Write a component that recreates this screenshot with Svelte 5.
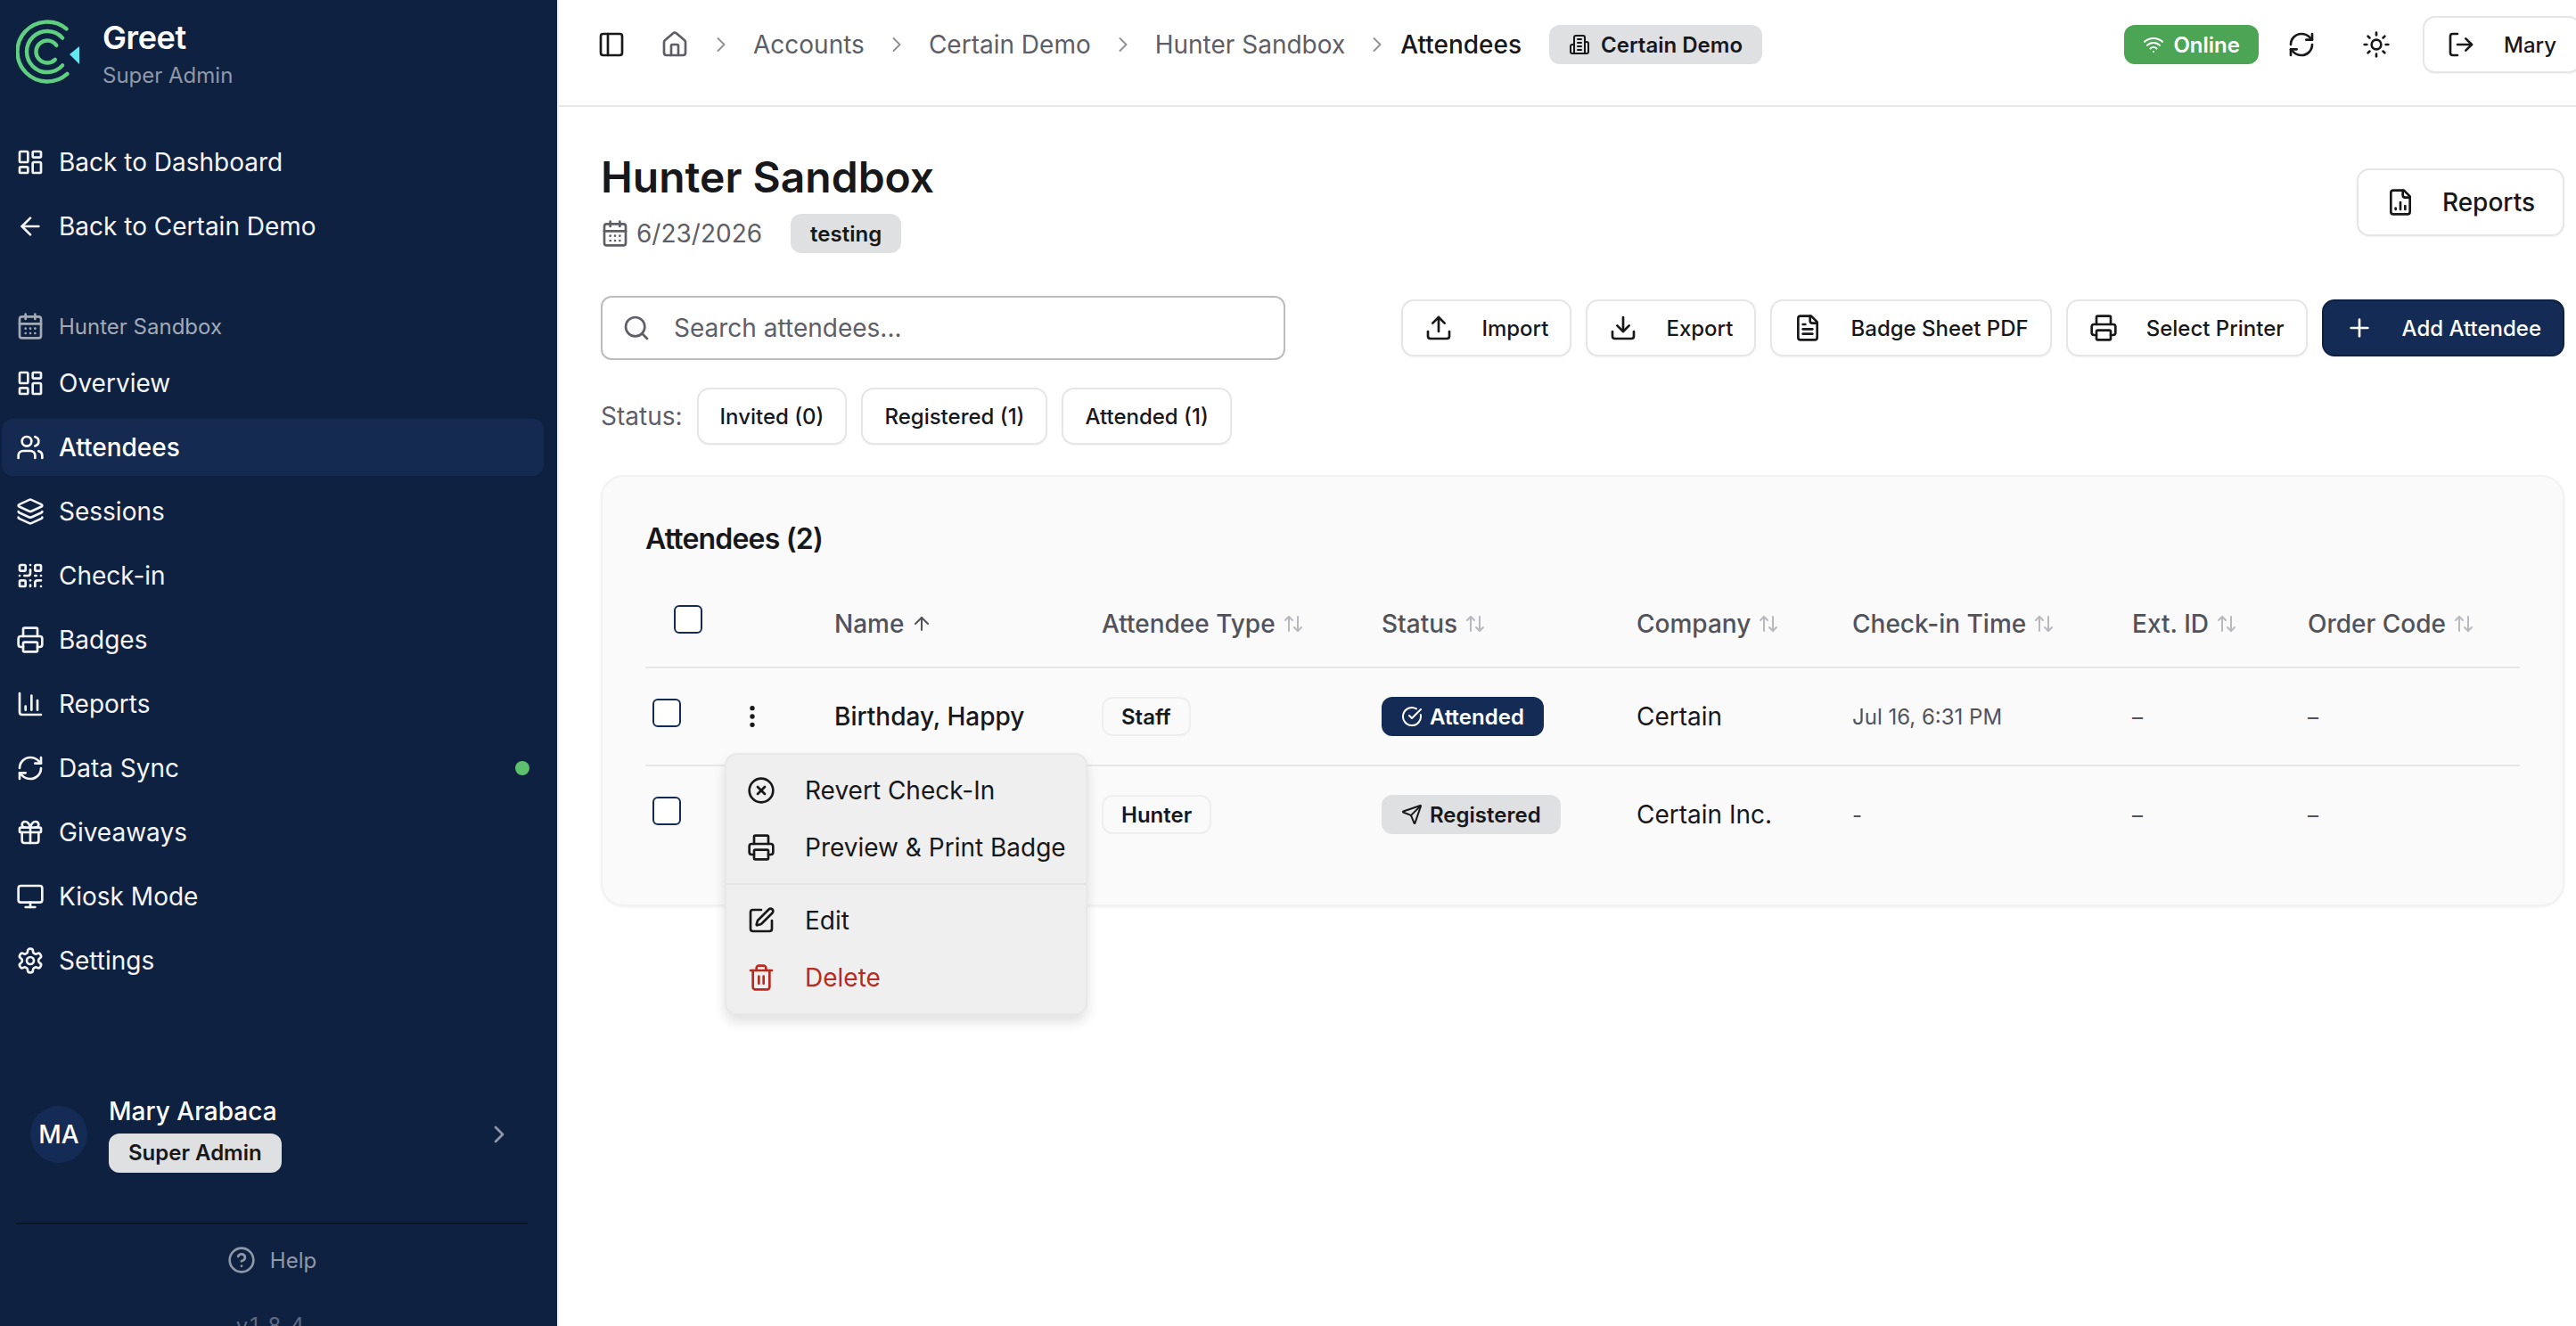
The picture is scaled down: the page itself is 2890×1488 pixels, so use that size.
<script>
  const icons = {
    dash: '<rect x="3" y="3" width="7" height="9" rx="1"/><rect x="14" y="3" width="7" height="5" rx="1"/><rect x="14" y="12" width="7" height="9" rx="1"/><rect x="3" y="16" width="7" height="5" rx="1"/>',
    back: '<path d="m12 19-7-7 7-7"/><path d="M19 12H5"/>',
    cal: '<path d="M8 2v4"/><path d="M16 2v4"/><rect x="3" y="4" width="18" height="18" rx="2"/><path d="M3 10h18"/><path d="M8 14h.01"/><path d="M12 14h.01"/><path d="M16 14h.01"/><path d="M8 18h.01"/><path d="M12 18h.01"/><path d="M16 18h.01"/>',
    users: '<path d="M16 21v-2a4 4 0 0 0-4-4H6a4 4 0 0 0-4 4v2"/><circle cx="9" cy="7" r="4"/><path d="M22 21v-2a4 4 0 0 0-3-3.87"/><path d="M16 3.13a4 4 0 0 1 0 7.75"/>',
    layers: '<path d="M12.83 2.18a2 2 0 0 0-1.66 0L2.6 6.08a1 1 0 0 0 0 1.83l8.58 3.91a2 2 0 0 0 1.66 0l8.58-3.9a1 1 0 0 0 0-1.83z"/><path d="M2 12a1 1 0 0 0 .58.91l8.6 3.91a2 2 0 0 0 1.65 0l8.58-3.9A1 1 0 0 0 22 12"/><path d="M2 17a1 1 0 0 0 .58.91l8.6 3.91a2 2 0 0 0 1.65 0l8.58-3.9A1 1 0 0 0 22 17"/>',
    qr: '<rect x="3" y="3" width="5" height="5" rx="1"/><rect x="16" y="3" width="5" height="5" rx="1"/><rect x="3" y="16" width="5" height="5" rx="1"/><path d="M21 16h-3a2 2 0 0 0-2 2v3"/><path d="M21 21v.01"/><path d="M12 7v3a2 2 0 0 1-2 2H7"/><path d="M3 12h.01"/><path d="M12 3h.01"/><path d="M12 16v.01"/><path d="M16 12h1"/><path d="M21 12v.01"/><path d="M12 21v-1"/>',
    print: '<path d="M6 18H4a2 2 0 0 1-2-2v-5a2 2 0 0 1 2-2h16a2 2 0 0 1 2 2v5a2 2 0 0 1-2 2h-2"/><path d="M6 9V3a1 1 0 0 1 1-1h10a1 1 0 0 1 1 1v6"/><rect x="6" y="14" width="12" height="8" rx="1"/>',
    chart: '<path d="M3 3v16a2 2 0 0 0 2 2h16"/><path d="M18 17V9"/><path d="M13 17V5"/><path d="M8 17v-3"/>',
    sync: '<path d="M3 12a9 9 0 0 1 9-9 9.75 9.75 0 0 1 6.74 2.74L21 8"/><path d="M21 3v5h-5"/><path d="M21 12a9 9 0 0 1-9 9 9.75 9.75 0 0 1-6.74-2.74L3 16"/><path d="M8 16H3v5"/>',
    gift: '<rect x="3" y="8" width="18" height="4" rx="1"/><path d="M12 8v13"/><path d="M19 12v7a2 2 0 0 1-2 2H7a2 2 0 0 1-2-2v-7"/><path d="M7.5 8a2.5 2.5 0 0 1 0-5A4.8 8 0 0 1 12 8a4.8 8 0 0 1 4.5-5 2.5 2.5 0 0 1 0 5"/>',
    monitor: '<rect x="2" y="3" width="20" height="14" rx="2"/><path d="M8 21h8"/><path d="M12 17v4"/>',
    gear: '<path d="M12.22 2h-.44a2 2 0 0 0-2 2v.18a2 2 0 0 1-1 1.73l-.43.25a2 2 0 0 1-2 0l-.15-.08a2 2 0 0 0-2.73.73l-.22.38a2 2 0 0 0 .73 2.73l.15.1a2 2 0 0 1 1 1.72v.51a2 2 0 0 1-1 1.74l-.15.09a2 2 0 0 0-.73 2.73l.22.38a2 2 0 0 0 2.73.73l.15-.08a2 2 0 0 1 2 0l.43.25a2 2 0 0 1 1 1.73V20a2 2 0 0 0 2 2h.44a2 2 0 0 0 2-2v-.18a2 2 0 0 1 1-1.73l.43-.25a2 2 0 0 1 2 0l.15.08a2 2 0 0 0 2.73-.73l.22-.39a2 2 0 0 0-.73-2.73l-.15-.08a2 2 0 0 1-1-1.74v-.5a2 2 0 0 1 1-1.74l.15-.09a2 2 0 0 0 .73-2.73l-.22-.38a2 2 0 0 0-2.73-.73l-.15.08a2 2 0 0 1-2 0l-.43-.25a2 2 0 0 1-1-1.73V4a2 2 0 0 0-2-2z"/><circle cx="12" cy="12" r="3"/>',
    chev: '<path d="m9 18 6-6-6-6"/>',
    help: '<circle cx="12" cy="12" r="10"/><path d="M9.09 9a3 3 0 0 1 5.83 1c0 2-3 3-3 3"/><path d="M12 17h.01"/>',
    panel: '<rect x="3" y="3" width="18" height="18" rx="2"/><path d="M9 3v18"/>',
    home: '<path d="M15 21v-8a1 1 0 0 0-1-1h-4a1 1 0 0 0-1 1v8"/><path d="M3 10a2 2 0 0 1 .709-1.528l7-5.999a2 2 0 0 1 2.582 0l7 5.999A2 2 0 0 1 21 10v9a2 2 0 0 1-2 2H5a2 2 0 0 1-2-2z"/>',
    building: '<path d="M6 22V4a2 2 0 0 1 2-2h8a2 2 0 0 1 2 2v18Z"/><path d="M6 12H4a2 2 0 0 0-2 2v6a2 2 0 0 0 2 2h2"/><path d="M18 9h2a2 2 0 0 1 2 2v9a2 2 0 0 1-2 2h-2"/><path d="M10 6h4"/><path d="M10 10h4"/><path d="M10 14h4"/><path d="M10 18h4"/>',
    wifi: '<path d="M12 20h.01"/><path d="M2 8.82a15 15 0 0 1 20 0"/><path d="M5 12.859a10 10 0 0 1 14 0"/><path d="M8.5 16.429a5 5 0 0 1 7 0"/>',
    sun: '<circle cx="12" cy="12" r="4"/><path d="M12 2v2"/><path d="M12 20v2"/><path d="m4.93 4.93 1.41 1.41"/><path d="m17.66 17.66 1.41 1.41"/><path d="M2 12h2"/><path d="M20 12h2"/><path d="m6.34 17.66-1.41 1.41"/><path d="m19.07 4.93-1.41 1.41"/>',
    logout: '<path d="M9 21H5a2 2 0 0 1-2-2V5a2 2 0 0 1 2-2h4"/><path d="m16 17 5-5-5-5"/><path d="M21 12H9"/>',
    filechart: '<path d="M15 2H6a2 2 0 0 0-2 2v16a2 2 0 0 0 2 2h12a2 2 0 0 0 2-2V7Z"/><path d="M14 2v4a2 2 0 0 0 2 2h4"/><path d="M8 18v-1"/><path d="M12 18v-6"/><path d="M16 18v-3"/>',
    filetext: '<path d="M15 2H6a2 2 0 0 0-2 2v16a2 2 0 0 0 2 2h12a2 2 0 0 0 2-2V7Z"/><path d="M14 2v4a2 2 0 0 0 2 2h4"/><path d="M10 9H8"/><path d="M16 13H8"/><path d="M16 17H8"/>',
    upload: '<path d="M21 15v4a2 2 0 0 1-2 2H5a2 2 0 0 1-2-2v-4"/><path d="m17 8-5-5-5 5"/><path d="M12 3v12"/>',
    download: '<path d="M21 15v4a2 2 0 0 1-2 2H5a2 2 0 0 1-2-2v-4"/><path d="m7 10 5 5 5-5"/><path d="M12 15V3"/>',
    plus: '<path d="M5 12h14"/><path d="M12 5v14"/>',
    search: '<circle cx="11" cy="11" r="8"/><path d="m21 21-4.3-4.3"/>',
    up: '<path d="m5 12 7-7 7 7"/><path d="M12 19V5"/>',
    updown: '<path d="m21 16-4 4-4-4"/><path d="M17 20V4"/><path d="m3 8 4-4 4 4"/><path d="M7 4v16"/>',
    dots: '<circle cx="12" cy="12" r="1"/><circle cx="12" cy="5" r="1"/><circle cx="12" cy="19" r="1"/>',
    xcircle: '<circle cx="12" cy="12" r="10"/><path d="m15 9-6 6"/><path d="m9 9 6 6"/>',
    pen: '<path d="M12 3H5a2 2 0 0 0-2 2v14a2 2 0 0 0 2 2h14a2 2 0 0 0 2-2v-7"/><path d="M18.375 2.625a1 1 0 0 1 3 3l-9.013 9.014a2 2 0 0 1-.853.505l-2.873.84a.5.5 0 0 1-.62-.62l.84-2.873a2 2 0 0 1 .506-.852z"/>',
    trash: '<path d="M3 6h18"/><path d="M19 6v14c0 1-1 2-2 2H7c-1 0-2-1-2-2V6"/><path d="M8 6V4c0-1 1-2 2-2h4c1 0 2 1 2 2v2"/><path d="M10 11v6"/><path d="M14 11v6"/>',
    check: '<path d="M21.801 10A10 10 0 1 1 17 3.335"/><path d="m9 11 3 3L22 4"/>',
    send: '<path d="M14.536 21.686a.5.5 0 0 0 .937-.024l6.5-19a.496.496 0 0 0-.635-.635l-19 6.5a.5.5 0 0 0-.024.937l7.93 3.18a2 2 0 0 1 1.112 1.11z"/><path d="m21.854 2.147-10.94 10.939"/>'
  };

  function arc(r, a1, a2) {
    const p = (a) => [35 + r * Math.cos((a * Math.PI) / 180), 36 + r * Math.sin((a * Math.PI) / 180)];
    const [x1, y1] = p(a1);
    const [x2, y2] = p(a2);
    return `M${x1.toFixed(2)} ${y1.toFixed(2)}A${r} ${r} 0 1 0 ${x2.toFixed(2)} ${y2.toFixed(2)}`;
  }

  const topNav = [
    { icon: 'dash', label: 'Back to Dashboard' },
    { icon: 'back', label: 'Back to Certain Demo' }
  ];
  const eventNav = [
    { icon: 'dash', label: 'Overview' },
    { icon: 'users', label: 'Attendees', active: true },
    { icon: 'layers', label: 'Sessions' },
    { icon: 'qr', label: 'Check-in' },
    { icon: 'print', label: 'Badges' },
    { icon: 'chart', label: 'Reports' },
    { icon: 'sync', label: 'Data Sync', dot: true },
    { icon: 'gift', label: 'Giveaways' },
    { icon: 'monitor', label: 'Kiosk Mode' },
    { icon: 'gear', label: 'Settings' }
  ];
  const crumbs = ['Accounts', 'Certain Demo', 'Hunter Sandbox'];
  const actions = [
    { icon: 'upload', label: 'Import' },
    { icon: 'download', label: 'Export' },
    { icon: 'filetext', label: 'Badge Sheet PDF' },
    { icon: 'print', label: 'Select Printer' }
  ];
  const chips = ['Invited (0)', 'Registered (1)', 'Attended (1)'];
  const cols = ['Attendee Type', 'Status', 'Company', 'Check-in Time', 'Ext. ID', 'Order Code'];
  const rows = [
    { name: 'Birthday, Happy', type: 'Staff', status: 'Attended', sIcon: 'check', sClass: 'navy', company: 'Certain', time: 'Jul 16, 6:31 PM' },
    { name: '', type: 'Hunter', status: 'Registered', sIcon: 'send', sClass: 'grey', company: 'Certain Inc.', time: '-' }
  ];
</script>

{#snippet icon(name, size = 32, sw = 2)}
  <svg class="ic" width={size} height={size} viewBox="0 0 24 24" fill="none" stroke="currentColor" stroke-width={sw} stroke-linecap="round" stroke-linejoin="round">{@html icons[name]}</svg>
{/snippet}

<div class="app">
  <aside class="side">
    <div class="brand">
      <svg class="logo" width="72" height="72" viewBox="0 0 72 72" fill="none" stroke="#5fd080" stroke-width="4.4" stroke-linecap="round">
        <path d={arc(33.5, -50, 48)} />
        <path d={arc(23, -42, 42)} />
        <path d={arc(12.5, -35, 45)} />
        <path d="M71 30 60 39 71 50Z" fill="#62e9f2" stroke="none" />
      </svg>
      <div class="brand-text">
        <div class="brand-name">Greet</div>
        <div class="brand-role">Super Admin</div>
      </div>
    </div>
    <nav class="nav">
      {#each topNav as n}
        <div class="item">{@render icon(n.icon)}<span>{n.label}</span></div>
      {/each}
    </nav>
    <div class="event-label">{@render icon('cal')}<span>Hunter Sandbox</span></div>
    <nav class="nav">
      {#each eventNav as n}
        <div class="item" class:active={n.active}>
          {@render icon(n.icon)}<span>{n.label}</span>
          {#if n.dot}<i class="dot"></i>{/if}
        </div>
      {/each}
    </nav>
    <div class="user">
      <div class="avatar">MA</div>
      <div class="user-text">
        <div class="user-name">Mary Arabaca</div>
        <div class="user-badge">Super Admin</div>
      </div>
      <span class="user-chev">{@render icon('chev')}</span>
    </div>
    <div class="side-rule"></div>
    <div class="help">{@render icon('help')}<span>Help</span></div>
    <div class="version">v1.8.4</div>
  </aside>

  <main class="main">
    <header class="bar">
      <div class="bar-left">
        <span class="panel">{@render icon('panel')}</span>
        <span class="home">{@render icon('home')}</span>
        {#each crumbs as c}
          <span class="sep">{@render icon('chev', 28, 1.6)}</span>
          <span class="crumb">{c}</span>
        {/each}
        <span class="sep">{@render icon('chev', 28, 1.6)}</span>
        <span class="crumb current">Attendees</span>
        <span class="tag org">{@render icon('building', 24)}Certain Demo</span>
      </div>
      <div class="bar-right">
        <span class="tag online">{@render icon('wifi', 24)}Online</span>
        <span class="ghost">{@render icon('sync')}</span>
        <span class="ghost">{@render icon('sun')}</span>
        <button class="btn mary">{@render icon('logout')}Mary</button>
      </div>
    </header>

    <div class="content">
      <section class="title-row">
        <div>
          <h1>Hunter Sandbox</h1>
          <div class="meta">
            <span class="date">{@render icon('cal')}6/23/2026</span>
            <span class="tag test">testing</span>
          </div>
        </div>
        <button class="btn reports">{@render icon('filechart')}Reports</button>
      </section>

      <section class="tools">
        <div class="search">{@render icon('search')}<span>Search attendees...</span></div>
        <div class="actions">
          {#each actions as a}
            <button class="btn act">{@render icon(a.icon)}{a.label}</button>
          {/each}
          <button class="btn act primary">{@render icon('plus')}Add Attendee</button>
        </div>
      </section>

      <section class="filters">
        <span class="flabel">Status:</span>
        {#each chips as c}<button class="chip">{c}</button>{/each}
      </section>

      <section class="card">
        <h2>Attendees (2)</h2>
        <div class="grid head">
          <div class="c-check"><span class="box"></span></div>
          <div></div>
          <div class="th">Name {@render icon('up', 24)}</div>
          {#each cols as c}
            <div class="th">{c} <span class="sort">{@render icon('updown', 24)}</span></div>
          {/each}
        </div>
        {#each rows as r, i}
          <div class="grid row" class:last={i === rows.length - 1}>
            <div class="c-check row-check"><span class="box"></span></div>
            <div class="dots">{#if i === 0}{@render icon('dots')}{/if}</div>
            <div class="name">{r.name}</div>
            <div><span class="type">{r.type}</span></div>
            <div><span class="tag st {r.sClass}">{@render icon(r.sIcon, 24)}{r.status}</span></div>
            <div class="company">{r.company}</div>
            <div class="time">{r.time}</div>
            <div class="dash">–</div>
            <div class="dash">–</div>
          </div>
        {/each}
      </section>
    </div>

    <div class="menu">
      <div class="mi">{@render icon('xcircle')}Revert Check-In</div>
      <div class="mi">{@render icon('print')}Preview &amp; Print Badge</div>
      <div class="msep"></div>
      <div class="mi">{@render icon('pen')}Edit</div>
      <div class="mi del">{@render icon('trash')}Delete</div>
    </div>
  </main>
</div>

<style>
  :global(body) { margin: 0; background: #fff; overflow: hidden; }
  .app {
    display: flex;
    width: 2890px;
    height: 1488px;
    overflow: hidden;
    font-family: Inter, "Liberation Sans", sans-serif;
    color: #18181b;
    font-size: 28px;
  }
  .ic { flex: none; display: block; }
  button { font: inherit; color: inherit; background: #fff; cursor: pointer; }

  .side {
    flex: none;
    width: 627px;
    height: 1488px;
    box-sizing: border-box;
    background: #0f2140;
    color: #fff;
    border-right: 2px solid #eef0f3;
    overflow: hidden;
  }
  .brand { display: flex; align-items: center; height: 150px; box-sizing: border-box; padding: 0 0 29px 18px; gap: 25px; }
  .logo { margin-top: -5px; }
  .brand-name { font-size: 36px; font-weight: 600; line-height: 44px; letter-spacing: -0.4px; }
  .brand-role { font-size: 24px; line-height: 32px; color: #8f98a8; margin-top: 5px; }
  .nav { display: flex; flex-direction: column; gap: 8px; margin: 0 15px 0 2px; }
  .item { position: relative; display: flex; align-items: center; gap: 16px; height: 64px; padding-left: 16px; border-radius: 12px; color: #f4f5f7; font-size: 28px; }
  .item.active { background: #142a50; font-weight: 500; color: #fff; }
  .dot { position: absolute; right: 16px; top: 24px; width: 16px; height: 16px; border-radius: 50%; background: #5cc06c; }
  .event-label { display: flex; align-items: center; gap: 16px; height: 40px; margin-top: 60px; margin-bottom: 12px; padding-left: 18px; color: #a3aab7; font-size: 24px; }
  .user { position: relative; display: flex; align-items: center; gap: 24px; margin-top: 120px; padding-left: 34px; }
  .avatar { width: 64px; height: 64px; border-radius: 50%; background: #142c55; display: flex; align-items: center; justify-content: center; font-size: 28px; font-weight: 500; }
  .user-name { font-size: 28px; line-height: 34px; font-weight: 500; }
  .user-badge { margin-top: 8px; width: fit-content; padding: 0 22px; height: 44px; line-height: 44px; border-radius: 12px; background: #dfe0e2; color: #18181b; font-size: 24px; font-weight: 600; }
  .user-chev { position: absolute; left: 544px; top: 27px; color: #8f98a8; }
  .side-rule { margin: 56px 0 0 18px; width: 574px; height: 2px; background: #0a1729; }
  .help { display: flex; align-items: center; justify-content: center; gap: 16px; height: 40px; margin-top: 20px; width: 610px; color: #8f98a8; font-size: 24px; }
  .version { margin-top: 36px; width: 608px; text-align: center; color: #5d6a82; font-size: 24px; line-height: 36px; letter-spacing: 2px; }

  .main { position: relative; flex: 1; min-width: 0; }
  .bar { display: flex; justify-content: space-between; align-items: center; height: 100px; padding: 0 0 18px 43px; border-bottom: 2px solid #e7e7e8; margin-right: -6px; }
  .bar-left, .bar-right { display: flex; align-items: center; }
  .bar-left { gap: 22px; }
  .panel { margin-right: 17px; }
  .home { color: #5e5e66; }
  .sep { color: #8f8f95; }
  .crumb { color: #5e5e66; font-size: 28px; }
  .crumb.current { color: #18181b; font-weight: 500; margin: 0 9px 0 -10px; }
  .tag { display: inline-flex; align-items: center; height: 44px; border-radius: 12px; font-size: 24px; font-weight: 600; padding: 0 22px; box-sizing: border-box; gap: 12px; background: #dfe0e2; color: #18181b; }
  .online { background: #4ca455; color: #fff; gap: 10px; padding: 0 21px; margin-right: -4px; }
  .ghost { display: flex; width: 64px; height: 64px; align-items: center; justify-content: center; margin-left: 20px; }
  .btn { display: inline-flex; align-items: center; border: 2px solid #e6e6e6; border-radius: 14px; box-sizing: border-box; box-shadow: 0 1px 2px rgba(0,0,0,.05); font-weight: 500; }
  .mary { margin-left: 20px; height: 64px; padding: 0 26px 0 25px; gap: 32px; font-size: 24px; }

  .content { padding: 49px 13px 0 47px; }
  .title-row { display: flex; justify-content: space-between; align-items: center; }
  h1 { margin: 0; font-size: 48px; line-height: 60px; font-weight: 600; }
  .meta { display: flex; align-items: center; gap: 32px; margin-top: 11px; }
  .date { display: flex; align-items: center; gap: 8px; color: #5e5e66; font-size: 28px; }
  .test { padding: 0 22px; }
  .reports { height: 76px; padding: 0 31px; gap: 31px; font-size: 28px; }

  .tools { display: flex; justify-content: space-between; align-items: center; margin-top: 48px; }
  .search { display: flex; align-items: center; gap: 26px; width: 768px; height: 72px; box-sizing: border-box; border: 2px solid #bdbdbd; border-radius: 12px; padding-left: 22px; color: #5e5e66; font-size: 28px; }
  .actions { display: flex; gap: 16px; }
  .act { height: 64px; padding: 0 24px; gap: 32px; font-size: 24px; }
  .primary { background: #142c55; color: #fff; border-color: #0f2140; }

  .filters { display: flex; align-items: center; gap: 16px; margin-top: 31px; }
  .flabel { color: #5e5e66; font-size: 28px; }
  .chip { height: 64px; padding: 0 24px; border: 2px solid #e6e6e6; border-radius: 14px; font-size: 24px; font-weight: 500; box-shadow: 0 1px 2px rgba(0,0,0,.05); }

  .card { margin-top: 34px; height: 484px; box-sizing: border-box; background: #fafafa; border: 2px solid #f2f2f2; border-radius: 26px; padding: 48px 48px 0; box-shadow: 0 1px 3px rgba(0,0,0,.06); }
  h2 { margin: 0; font-size: 32px; line-height: 44px; font-weight: 600; letter-spacing: -0.8px; }
  .grid { display: grid; grid-template-columns: 92px 120px 300px 314px 286px 242px 314px 197px 1fr; align-items: center; }
  .head { height: 98px; margin-top: 23px; border-bottom: 2px solid #e7e7e8; }
  .row { height: 108px; border-bottom: 2px solid #e7e7e8; }
  .row.last { border-bottom: 0; }
  .th { display: flex; align-items: center; gap: 8px; color: #52525b; font-size: 28px; font-weight: 500; padding-top: 2px; }
  .sort { color: #b9b9bd; }
  .c-check { padding-left: 32px; margin-top: -8px; }
  .row-check { padding-left: 8px; }
  .box { display: block; width: 32px; height: 32px; box-sizing: border-box; border: 2px solid #142c55; border-radius: 6px; background: #fff; }
  .dots { padding-left: 12px; }
  .name { font-size: 28px; font-weight: 500; }
  .type { display: inline-flex; align-items: center; height: 44px; padding: 0 20px; border: 2px solid #eeeeee; border-radius: 12px; font-size: 24px; font-weight: 600; box-sizing: border-box; }
  .st { gap: 8px; padding: 0 22px; }
  .navy { background: #142c55; color: #fff; }
  .grey { background: #dfe0e2; }
  .company { font-size: 28px; }
  .time { font-size: 24px; color: #52525b; }
  .dash { font-size: 24px; color: #52525b; }

  .menu { position: absolute; left: 186px; top: 845px; width: 407px; box-sizing: border-box; padding: 8px 0; background: #efefef; border: 2px solid #e8e8e8; border-radius: 14px; box-shadow: 0 8px 14px rgba(0,0,0,.12); }
  .mi { display: flex; align-items: center; gap: 33px; height: 64px; padding-left: 23px; font-size: 28px; }
  .del { color: #b92a1f; }
  .msep { height: 2px; margin: 8px 0; background: #e4e4e4; }
</style>
